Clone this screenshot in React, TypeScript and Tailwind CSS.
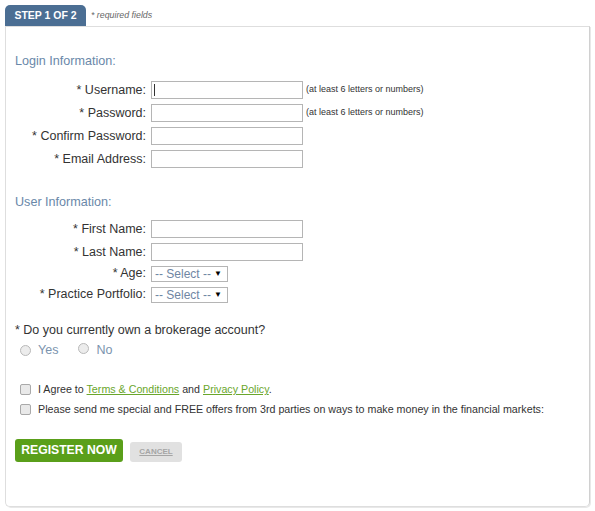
import React from "react";

const font = { fontFamily: '"Liberation Sans", Arial, sans-serif' };

function Row({ label, children, h = "h-[18px]" }: { label: string; children: React.ReactNode; h?: string }) {
  return (
    <div className={`flex items-center ${h}`}>
      <div className="w-[136px] text-right text-[12.5px] leading-[15px] text-[#333] pr-[5px] whitespace-nowrap">{label}</div>
      {children}
    </div>
  );
}

function TextInput({ caret }: { caret?: boolean }) {
  return (
    <div className="w-[152px] h-[18px] border border-[#b5b5b5] bg-white flex items-center pl-[2px]">
      {caret && <div className="w-px h-[12px] bg-[#333]" />}
    </div>
  );
}

function Select() {
  return (
    <div className="w-[77px] h-[16px] border border-[#b5b5b5] bg-white flex items-center justify-between pl-[3px] pr-[5px] whitespace-nowrap">
      <span className="text-[12px] leading-[14px] text-[#6f86a3]">-- Select --</span>
      <span className="text-[8px] leading-[10px] text-black">▼</span>
    </div>
  );
}

function Radio() {
  return <span className="inline-block w-[11px] h-[11px] rounded-full border border-[#b9b9b9] bg-[#ececec]" />;
}

function Checkbox() {
  return <span className="inline-block w-[11px] h-[11px] rounded-[2px] border border-[#a9a9a9] bg-[#e9e9e9]" />;
}

export default function App() {
  return (
    <div className="w-[595px] h-[511px] bg-white relative" style={font}>
      <div className="pt-[5px] pl-[5px] flex items-end">
        <div className="w-[81px] h-[21px] bg-[#4b6e93] rounded-t-[5px] flex items-center justify-center text-white font-bold text-[10.5px]">
          STEP 1 OF 2
        </div>
        <div className="ml-[5px] h-[21px] flex items-center text-[8.8px] italic text-[#666]">* required fields</div>
      </div>
      <div className="mx-[5px] w-[585px] h-[481px] border border-[#dedede] border-r-[#d0d0d0] rounded-b-[5px] px-[9px] shadow-[1px_1px_0_#e8e8e8]">
        <div className="mt-[26px] text-[12.6px] leading-[16px] text-[#6a88a9]">Login Information:</div>
        <div className="mt-[12px] flex flex-col gap-[5px]">
          <Row label="* Username:">
            <TextInput caret />
            <span className="ml-[3px] text-[9px] text-[#333]">(at least 6 letters or numbers)</span>
          </Row>
          <Row label="* Password:">
            <TextInput />
            <span className="ml-[3px] text-[9px] text-[#333]">(at least 6 letters or numbers)</span>
          </Row>
          <Row label="* Confirm Password:">
            <TextInput />
          </Row>
          <Row label="* Email Address:">
            <TextInput />
          </Row>
        </div>
        <div className="mt-[26px] text-[12.6px] leading-[16px] text-[#6a88a9]">User Information:</div>
        <div className="mt-[10px] flex flex-col gap-[5px]">
          <Row label="* First Name:">
            <TextInput />
          </Row>
          <Row label="* Last Name:">
            <TextInput />
          </Row>
        </div>
        <div className="mt-[4px] flex flex-col gap-[4px]">
          <Row label="* Age:" h="h-[17px]">
            <Select />
          </Row>
          <Row label="* Practice Portfolio:" h="h-[17px]">
            <Select />
          </Row>
        </div>
        <div className="mt-[20px] text-[12.5px] leading-[15px] text-[#333]">* Do you currently own a brokerage account?</div>
        <div className="mt-[5px] flex items-center h-[15px] pl-[5px] text-[12.5px] text-[#7b94ae]">
          <Radio />
          <span className="ml-[7px]">Yes</span>
          <span className="ml-[20px]"><Radio /></span>
          <span className="ml-[7px]">No</span>
        </div>
        <div className="mt-[24px] flex items-center h-[15px] pl-[5px] text-[10.7px] text-[#333]">
          <Checkbox />
          <span className="ml-[7px]">
            I Agree to <span className="text-[#6aa62b] underline">Terms &amp; Conditions</span> and{" "}
            <span className="text-[#6aa62b] underline">Privacy Policy</span>.
          </span>
        </div>
        <div className="mt-[5px] flex items-center h-[15px] pl-[5px] text-[10.7px] text-[#333]">
          <Checkbox />
          <span className="ml-[7px]">
            Please send me special and FREE offers from 3rd parties on ways to make money in the financial markets:
          </span>
        </div>
        <div className="mt-[22px] flex items-end">
          <div className="w-[108px] h-[23px] bg-[#5a9f1a] rounded-[3px] flex items-center justify-center text-white font-bold text-[12.2px]">
            REGISTER NOW
          </div>
          <div className="ml-[7px] w-[52px] h-[20px] bg-[#e1e1e1] rounded-[3px] flex items-center justify-center text-[8px] font-bold text-[#a5a5a5] underline">
            CANCEL
          </div>
        </div>
      </div>
    </div>
  );
}
